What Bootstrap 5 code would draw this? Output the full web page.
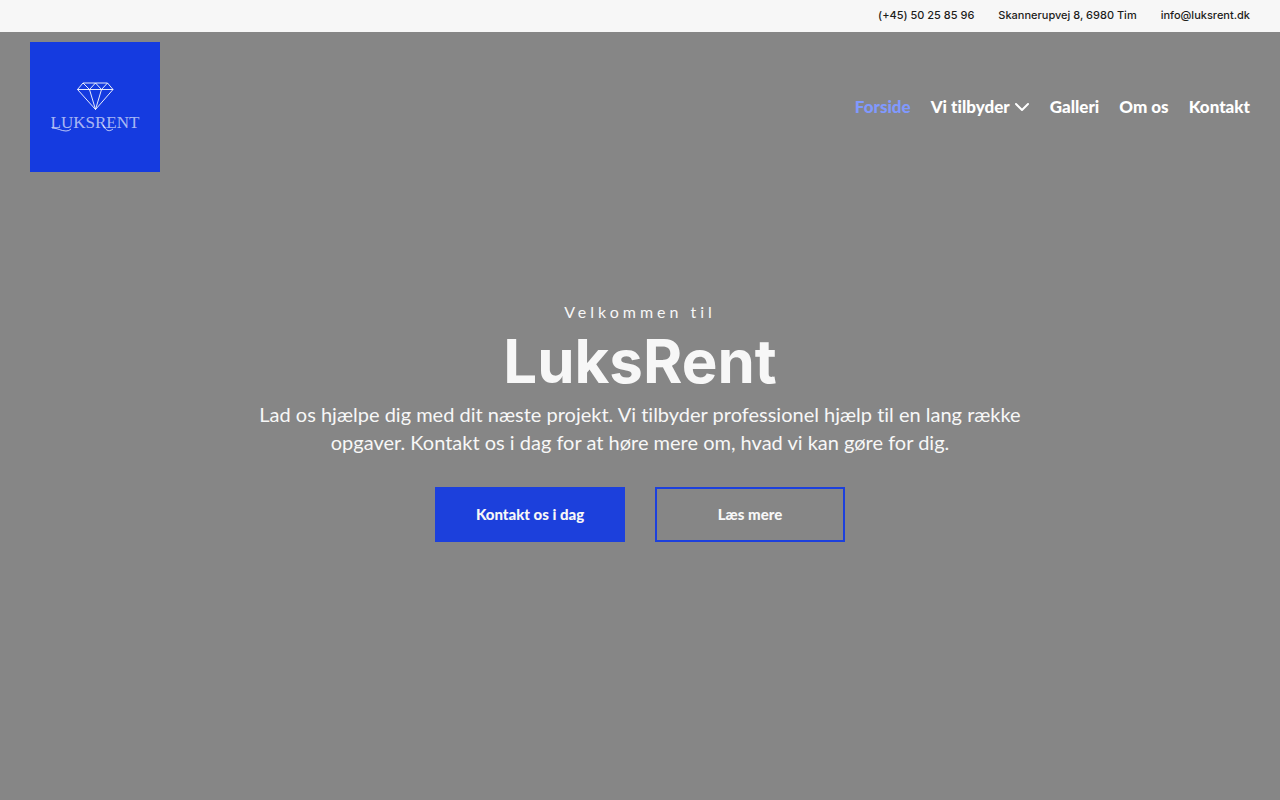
<!DOCTYPE html>
<html lang="da">
<head>
<meta charset="utf-8">
<meta name="viewport" content="width=device-width, initial-scale=1">
<title>LuksRent</title>
<link href="https://cdn.jsdelivr.net/npm/bootstrap@5.3.0/dist/css/bootstrap.min.css" rel="stylesheet">
<style>
  body, button { font-variant-ligatures: none; }
  body { font-family: Lato, "Open Sans", sans-serif; background: #868686; color: #f7f7f7; }
  .topbar { background: #f7f7f7; min-height: 32px; padding: 0 30px 2px; gap: 4px 24px; font-family: Inter, sans-serif; font-size: 11px; line-height: 16px; font-weight: 500; }
  .topbar a { color: #1d1d1b; }
  .site-header { padding: 10px 30px; }
  .logo { width: 130px; height: 130px; background: #153be0; }
  .main-menu { gap: 20px; font-size: 17px; line-height: 24px; font-weight: 900; }
  .main-menu .nav-link { color: #fff; padding: 0; }
  .main-menu .nav-link.active { color: #8099ff; }
  .hero { padding: 120px 30px; }
  .eyebrow { font-size: 16px; line-height: 20px; letter-spacing: 4px; }
  .hero h1 { font-family: Inter, sans-serif; font-size: 60px; line-height: 70px; font-weight: 700; }
  .intro { max-width: 780px; font-size: 20px; line-height: 28px; }
  .cta-row { gap: 30px; padding-top: 31px; }
  .cta { width: 190px; height: 55px; border: 2px solid #1c40dc; border-radius: 0; color: #f7f7f7; font-size: 15px; font-weight: 900; }
  .cta-solid { background: #1c40dc; }
</style>
</head>
<body class="min-vh-100">
<address class="topbar d-flex flex-wrap justify-content-end align-items-center mb-0">
  <a class="text-decoration-none" href="tel:+4550258596">(+45) 50 25 85 96</a>
  <a class="text-decoration-none" href="#adresse">Skannerupvej 8, 6980 Tim</a>
  <a class="text-decoration-none" href="mailto:info@luksrent.dk">info@luksrent.dk</a>
</address>
<header class="site-header d-flex flex-wrap justify-content-between align-items-center">
  <a href="#" class="d-block" aria-label="LuksRent">
    <svg class="logo d-block" viewBox="0 0 130 130" fill="none" stroke="#fff">
      <path d="M53 41H77.500L83 47.500L65.500 67.500L47.500 47.500L53 41M47.500 47.500H83M53 41L59.500 47.500L65.500 41L71.500 47.500L77.500 41M59.500 47.500L65.500 67.500L71.500 47.500" stroke-width=".9"/>
      <text x="65" y="86" text-anchor="middle" font-family="Liberation Serif, serif" font-size="17" fill="#fff" fill-opacity=".65" stroke="none">LUKSRENT</text>
      <path d="M22 86C28 86 31 89 36 89Q39 89 41 87M73 83C75 87 78 91 83 87" stroke-width=".9" opacity=".8"/>
    </svg>
  </a>
  <nav aria-label="Hovedmenu">
    <ul class="main-menu nav">
      <li><a class="nav-link active" aria-current="page" href="#">Forside</a></li>
      <li class="dropdown">
        <button class="nav-link border-0 bg-transparent d-flex align-items-center" type="button" data-bs-toggle="dropdown" aria-expanded="false">Vi tilbyder
          <svg class="ms-1" width="16" height="16" viewBox="0 0 16 16" fill="none" stroke="currentColor" stroke-width="2" stroke-linecap="round" stroke-linejoin="round"><path d="M2 5L8 11L14 5"/></svg>
        </button>
      </li>
      <li><a class="nav-link" href="#galleri">Galleri</a></li>
      <li><a class="nav-link" href="#om">Om os</a></li>
      <li><a class="nav-link" href="#kontakt">Kontakt</a></li>
    </ul>
  </nav>
</header>
<main class="hero d-flex flex-column align-items-center text-center">
  <p class="eyebrow mb-1">Velkommen til</p>
  <h1 class="mb-1">LuksRent</h1>
  <p class="intro mb-0">Lad os hjælpe dig med dit næste projekt. Vi tilbyder professionel hjælp til en lang række opgaver. Kontakt os i dag for at høre mere om, hvad vi kan gøre for dig.</p>
  <div class="cta-row d-flex flex-wrap justify-content-center">
    <button class="btn cta cta-solid" type="button">Kontakt os i dag</button>
    <button class="btn cta" type="button">Læs mere</button>
  </div>
</main>
<script src="https://cdn.jsdelivr.net/npm/bootstrap@5.3.0/dist/js/bootstrap.bundle.min.js"></script>
</body>
</html>
